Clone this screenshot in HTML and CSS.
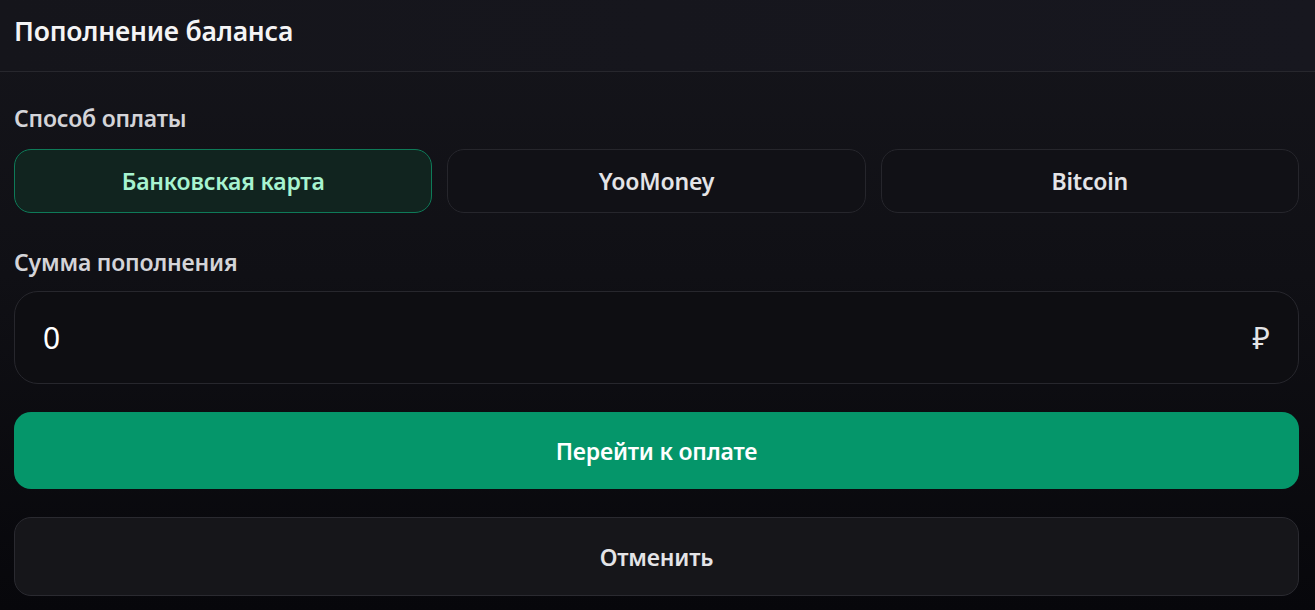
FILE: index.html
```html
<!DOCTYPE html>
<html lang="ru">
<head>
<meta charset="utf-8">
<link rel="stylesheet" href="styles.css">
</head>
<body>
<div class="modal">
  <header class="modal-header">
    <h1 class="title">Пополнение баланса</h1>
  </header>
  <div class="modal-body">
    <div class="label">Способ оплаты</div>
    <div class="methods">
      <button class="method active">Банковская карта</button>
      <button class="method">YooMoney</button>
      <button class="method">Bitcoin</button>
    </div>
    <div class="label label-amount">Сумма пополнения</div>
    <div class="amount">
      <span class="amount-value">0</span>
      <span class="currency">₽</span>
    </div>
    <button class="btn-primary">Перейти к оплате</button>
    <button class="btn-secondary">Отменить</button>
  </div>
</div>
</body>
</html>
```
FILE: styles.css
```css
* { box-sizing: border-box; }
html, body { margin: 0; height: 100%; }
body {
  background: linear-gradient(180deg, #15151b 0%, #101015 45%, #07070b 100%);
  font-family: "Noto Sans", "Open Sans", sans-serif;
  color: #f4f4f5;
  overflow: hidden;
}
.modal { width: 1315px; height: 610px; }
.modal-header {
  height: 72px;
  border-bottom: 1px solid #27272d;
  padding: 0 14px;
  display: flex;
  align-items: center;
  background: linear-gradient(90deg, #15151b 0%, #17171f 100%);
}
.title {
  margin: 0;
  margin-top: -10px;
  font-size: 26.5px;
  font-weight: 600;
  color: #f4f4f5;
  letter-spacing: -0.2px;
}
.modal-body {
  padding: 30px 16px 0 14px;
  display: flex;
  flex-direction: column;
}
.label {
  font-size: 23px;
  font-weight: 600;
  color: #d4d4d8;
  line-height: 32px;
  height: 32px;
  margin-bottom: 15px;
  letter-spacing: -0.2px;
}
.label-amount { margin-top: 33px; margin-bottom: 13px; }
.methods {
  display: grid;
  grid-template-columns: repeat(3, 1fr);
  gap: 15px;
}
.method {
  height: 64px;
  border-radius: 17px;
  border: 1px solid #26262c;
  background: #111116;
  color: #e4e4e7;
  font-family: inherit;
  font-size: 23px;
  font-weight: 600;
  letter-spacing: -0.2px;
}
.method.active {
  background: #11241f;
  border-color: #0e7a58;
  color: #a7f3d0;
}
.amount {
  height: 93px;
  border: 1px solid #27272d;
  border-radius: 24px;
  background: #0e0e12;
  display: flex;
  align-items: center;
  justify-content: space-between;
  padding: 0 28px 0 28px;
}
.amount-value { font-size: 30px; color: #ffffff; }
.currency { font-size: 30px; color: #e4e4e7; }
.btn-primary {
  margin-top: 28px;
  height: 77px;
  border: none;
  border-radius: 17px;
  background: #05966a;
  color: #ffffff;
  font-family: inherit;
  font-size: 23px;
  font-weight: 600;
  letter-spacing: -0.2px;
}
.btn-secondary {
  margin-top: 28px;
  height: 79px;
  border: 1px solid #2a2a30;
  border-radius: 17px;
  background: #16161a;
  color: #e4e4e7;
  font-family: inherit;
  font-size: 23px;
  font-weight: 600;
  letter-spacing: -0.2px;
}
```
